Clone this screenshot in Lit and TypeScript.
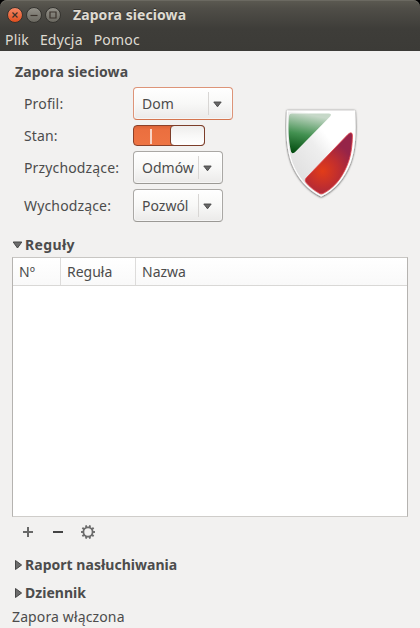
import { LitElement, html, css, svg } from "lit";
import { customElement, property } from "lit/decorators.js";

const FONT = css`"Noto Sans", "Open Sans", sans-serif`;

@customElement("combo-box")
class ComboBox extends LitElement {
  @property() value = "";
  static styles = css`
    :host { display: block; height: 33px; box-sizing: border-box; letter-spacing: 0; }
    .box {
      display: flex; align-items: center; box-sizing: border-box; height: 33px;
      padding-left: 8px; border: 1px solid #aaa8a5; border-bottom-color: #9b9995; border-radius: 4px;
      background: linear-gradient(#fff, #f8f8f7 50%, #ebeae9);
      box-shadow: inset 0 0 0 1px rgba(255, 255, 255, 0.5);
    }
    :host([focused]) .box { border-color: #dd9478; border-bottom-color: #d4754f; }
    .value { flex: 1; line-height: 20px; white-space: nowrap; }
    .arrow { display: flex; align-items: center; width: 23px; height: 23px; border-left: 1px solid #d8d6d4; }
    svg { margin-left: 4px; margin-top: 2px; }
  `;
  render() {
    return html`<div class="box">
      <span class="value">${this.value}</span>
      <span class="arrow"><svg width="9" height="7" viewBox="0 0 9 7"><path d="M.8 1h7.4L4.5 5.8z" fill="#686868" stroke="#454545" stroke-width=".9"/></svg></span>
    </div>`;
  }
}

@customElement("section-expander")
class SectionExpander extends LitElement {
  @property() label = "";
  @property({ type: Boolean }) open = false;
  static styles = css`
    :host { display: flex; align-items: center; height: 20px; font-weight: 700; white-space: nowrap; letter-spacing: 0.03px; }
    :host([open]) { letter-spacing: 0.35px; }
    svg { width: 13px; height: 12px; flex: none; }
  `;
  render() {
    const d = this.open ? "M1.2 3h8.6L5.5 9z" : "M3.5 1.5v9L9.6 6z";
    return html`<svg viewBox="0 0 13 12"><path d=${d} fill="#6c6c6c" stroke="#464646"/></svg><span>${this.label}</span>`;
  }
}

@customElement("app-root")
class AppRoot extends LitElement {
  static styles = css`
    :host {
      display: flex; flex-direction: column; width: 420px; height: 628px; box-sizing: border-box;
      overflow: hidden; background: #f2f1f0; color: #4c4c4c; font: 14px/20px ${FONT};
    }
    .frame { background: #000; flex: none; }
    .top { height: 51px; border-radius: 7px 7px 0 0; background: linear-gradient(#5c5a52 0, #504e48 8px, #3e3d39 29px, #3c3b37); color: #dfdbd2; box-shadow: inset 0 1px #6b6961; }
    .titlebar { display: flex; align-items: center; height: 29px; padding-left: 7px; gap: 3px; }
    .titlebar svg { width: 16px; height: 16px; }
    .title { margin-left: 9px; font-weight: 700; letter-spacing: 0.08px; text-shadow: 0 -1px #33322e; }
    .menu { display: flex; height: 22px; padding-left: 5px; gap: 11px; line-height: 22px; letter-spacing: 0.18px; }
    .content { display: flex; flex-direction: column; flex: 1; padding: 11px 12px 0; }
    .heading { padding-left: 3px; font-weight: 700; letter-spacing: 0.08px; }
    .settings { display: flex; margin-top: 5px; height: 135px; }
    .form { display: grid; width: 273px; grid-template-columns: 109px auto; grid-template-rows: 33px 21px 33px 33px; row-gap: 5px; padding-left: 12px; box-sizing: border-box; align-items: center; justify-items: start; letter-spacing: 0.15px; }
    .form .wide { width: 100px; }
    .form .narrow { width: 90px; }
    .switch { display: flex; justify-content: flex-end; box-sizing: border-box; width: 72px; height: 21px; border: 1px solid #8b4129; border-radius: 4px; background: linear-gradient(#dc6337, #eb6f3f 4px, #ee7443); position: relative; }
    .mark { position: absolute; left: 16px; top: 3px; width: 2px; height: 15px; background: #f9d3c6; }
    .knob { width: 35px; height: 21px; margin: -1px; box-sizing: border-box; border: 1px solid #7c3e2a; border-radius: 4px; background: linear-gradient(#eeedec, #f8f8f7 50%, #fff); }
    .shield { width: 73px; height: 92px; margin-top: 21px; }
    .rules { margin-top: 13px; }
    .table { height: 260px; box-sizing: border-box; margin-top: 2px; border: 1px solid #b5b3b0; border-top-color: #c8c6c3; border-bottom-color: #cfcdca; background: #fff; flex: none; }
    .head { display: grid; grid-template-columns: 48px 75px 1fr; height: 28px; box-sizing: border-box; border-bottom: 1px solid #d9d8d6; background: linear-gradient(#fff, #f9f9f9); line-height: 27px; }
    .head span { padding-left: 6px; border-right: 1px solid #dddcdb; }
    .head span:last-child { border: 0; }
    .tools { display: flex; gap: 14px; padding-left: 8px; margin-top: 7px; height: 16px; }
    .report { margin-top: 15px; }
    .log { margin-top: 8px; }
    .status { margin-top: 4px; white-space: nowrap; letter-spacing: 0.13px; }
  `;

  windowButton(kind: "close" | "min" | "max") {
    const close = kind === "close";
    const glyph = { close: "M5.5 5.5l5 5m0-5l-5 5", min: "M4.5 8.5h7", max: "M5 5h6v6H5z" }[kind];
    return html`<svg viewBox="0 0 16 16">
      <linearGradient id=${`g-${kind}`} x2="0" y2="1"><stop stop-color=${close ? "#f58a68" : "#94928a"}/><stop offset="1" stop-color=${close ? "#e04d1c" : "#69675f"}/></linearGradient>
      <circle cx="8" cy="8" r="7.5" fill=${`url(#g-${kind})`} stroke="#33322e"/>
      <path d=${glyph} fill="none" stroke="#3b332c" stroke-width="1.2"/>
    </svg>`;
  }

  gear() {
    return html`<svg width="16" height="16" viewBox="0 0 16 16" fill="none" stroke="#6c6c6c">
      <circle cx="8" cy="8" r="4.6" stroke-width="1.8"/>
      ${Array.from({ length: 10 }, (_, i) => svg`<path d="M8 1v2.5" stroke-width="1.9" transform=${`rotate(${i * 36 + 18} 8 8)`}/>`)}
    </svg>`;
  }

  render() {
    return html`
      <div class="frame"><div class="top">
        <div class="titlebar">
          ${this.windowButton("close")}${this.windowButton("min")}${this.windowButton("max")}
          <span class="title">Zapora sieciowa</span>
        </div>
        <div class="menu"><span>Plik</span><span>Edycja</span><span>Pomoc</span></div>
      </div></div>
      <div class="content">
        <div class="heading">Zapora sieciowa</div>
        <div class="settings">
          <div class="form">
            <span>Profil:</span><combo-box class="wide" focused value="Dom"></combo-box>
            <span>Stan:</span><div class="switch"><i class="mark"></i><div class="knob"></div></div>
            <span>Przychodzące:</span><combo-box class="narrow" value="Odmów"></combo-box>
            <span>Wychodzące:</span><combo-box class="narrow" value="Pozwól"></combo-box>
          </div>
          <svg class="shield" viewBox="0 0 72 92" preserveAspectRatio="none">
            <defs>
              <linearGradient id="base" x1="0" y1="1" x2="1" y2="0"><stop stop-color="#d8d8d8"/><stop offset=".5" stop-color="#eee"/><stop offset=".65" stop-color="#fff"/></linearGradient>
              <linearGradient id="green" x1=".1" y1="1" x2=".3" y2="0"><stop stop-color="#00490d"/><stop offset=".5" stop-color="#439151"/><stop offset="1" stop-color="#c6d8c8"/></linearGradient>
              <radialGradient id="red" gradientUnits="userSpaceOnUse" cx="37" cy="63" r="31"><stop stop-color="#e23c18"/><stop offset=".5" stop-color="#c12e2e"/><stop offset="1" stop-color="#962448"/></radialGradient>
              <filter id="shade" x="-10%" y="-10%" width="120%" height="120%"><feDropShadow dx="0" dy=".4" stdDeviation="1.2" flood-opacity=".9"/></filter>
            </defs>
            <path d="M2.500 3h66c1.300 19 .9 37-4.500 52C58 70.500 48 82 35.700 88 24 82 13 70.500 7 55 1.600 40 1.200 22 2.500 3z" fill="url(#base)" stroke="#fff" stroke-width="1.200" filter="url(#shade)"/>
            <path d="M7 5.500h35c4 0 4 1.500 2 3.500L10.500 43.500c-2.500 2.500-4 2-4.700-.500C3.300 31 3.200 18.500 3.900 8.500 4.100 6.500 5 5.500 7 5.500z" fill="url(#green)"/>
            <path d="M61.500 27c3.500-3.500 5-2.500 5 1-.200 10-1.500 21-5.500 30-5.500 13-13 22-23 27.200-2 1-3 .800-4.500-.200-5-3-9-6-12.500-10.200-1.500-2-1.500-3.500.5-5.500z" fill="url(#red)" stroke="#e4444a" stroke-width=".8"/>
          </svg>
        </div>
        <section-expander class="rules" open label="Reguły"></section-expander>
        <div class="table"><div class="head"><span>Nº</span><span>Reguła</span><span>Nazwa</span></div></div>
        <div class="tools">
          <svg width="16" height="16"><path d="M3 8h10M8 3v10" stroke="#686868" stroke-width="2"/></svg>
          <svg width="16" height="16"><path d="M3 8h10" stroke="#444" stroke-width="2"/></svg>
          ${this.gear()}
        </div>
        <section-expander class="report" label="Raport nasłuchiwania"></section-expander>
        <section-expander class="log" label="Dziennik"></section-expander>
        <div class="status">Zapora włączona</div>
      </div>`;
  }
}
